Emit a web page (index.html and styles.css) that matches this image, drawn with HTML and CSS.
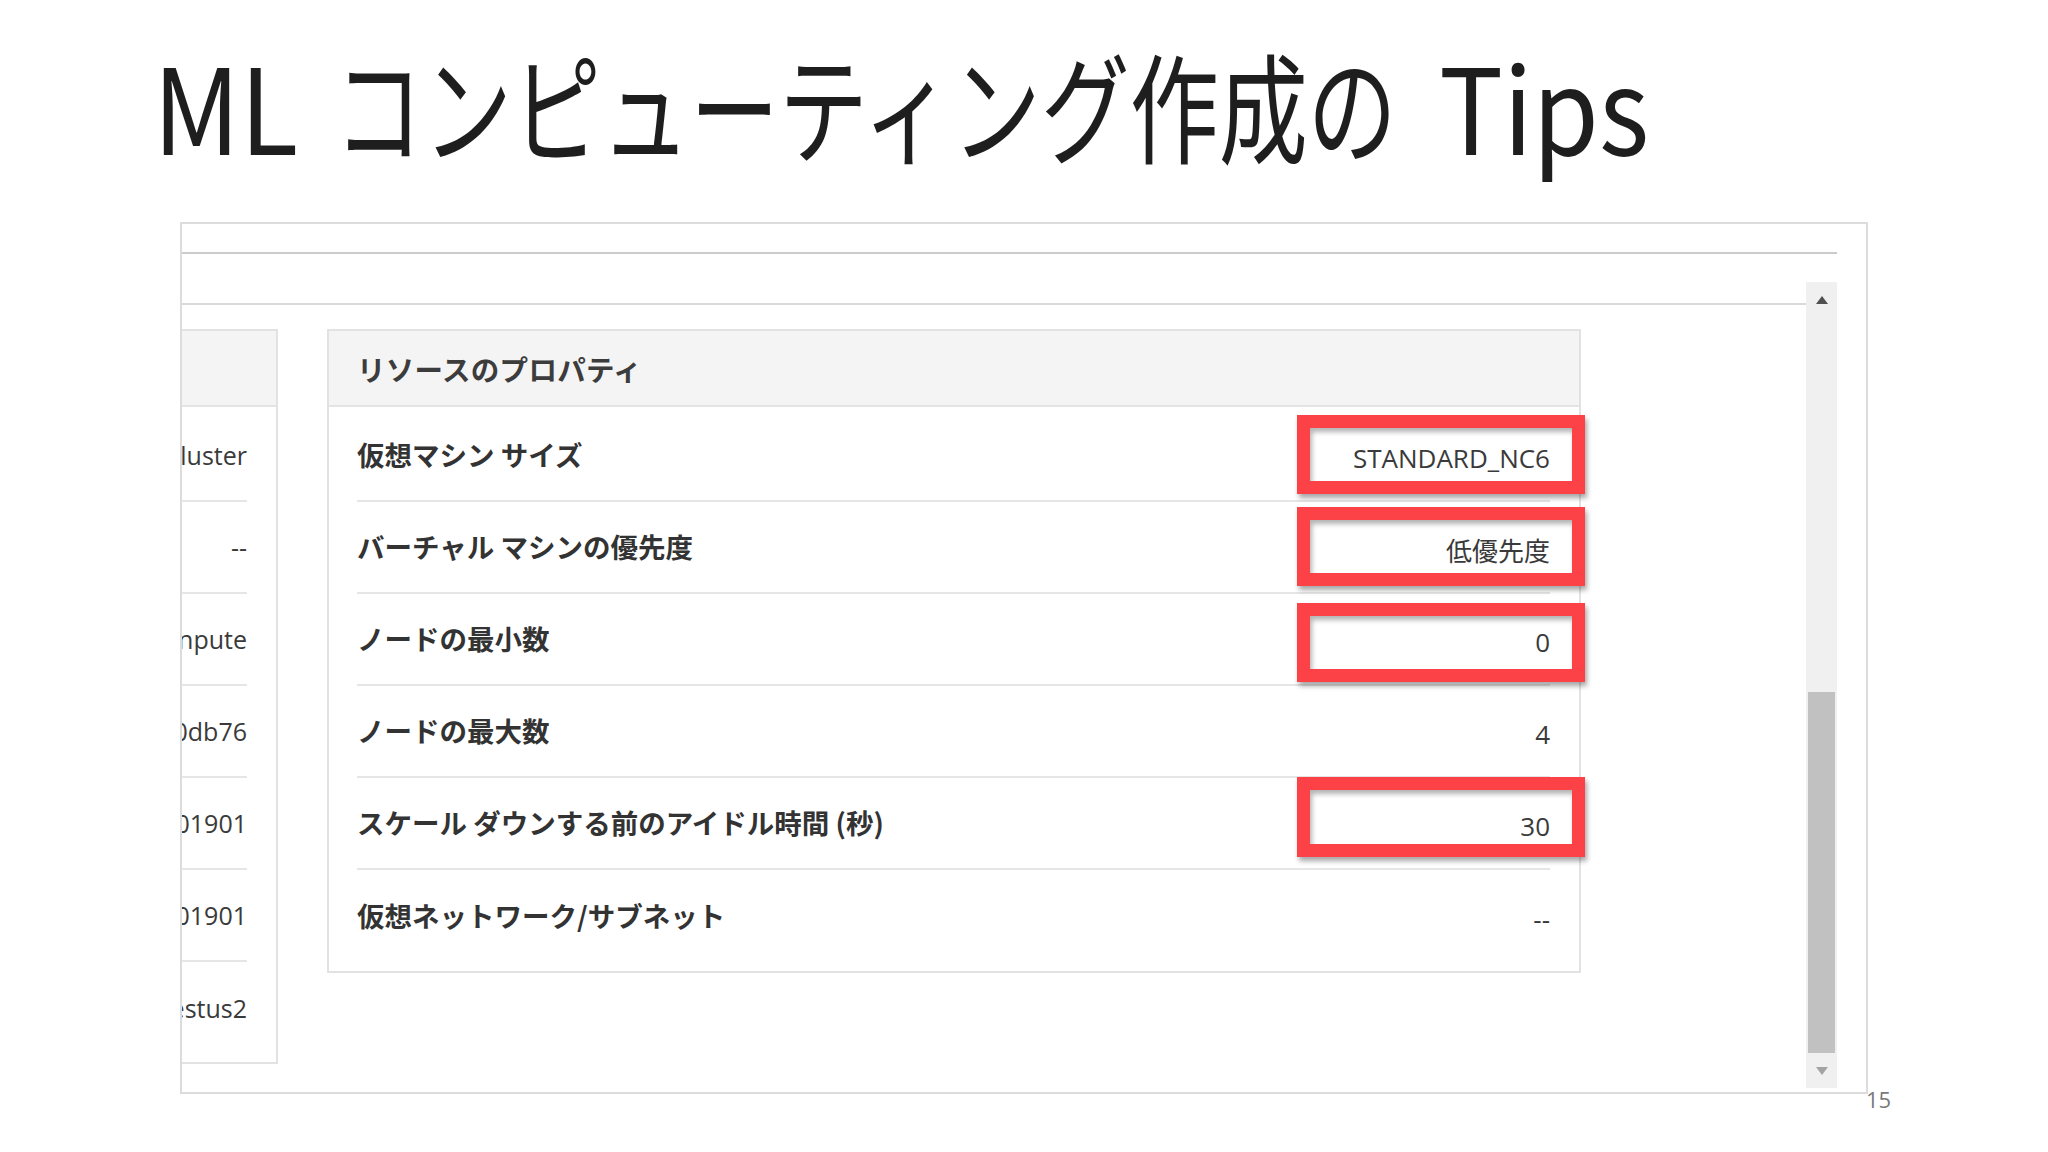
FILE: index.html
```html
<!DOCTYPE html>
<html lang="ja">
<head>
<meta charset="utf-8">
<title>ML コンピューティング作成の Tips</title>
<link rel="stylesheet" href="styles.css">
</head>
<body>
<div class="slide">
  <h1 class="title"><span class="seg seg-ml"><span class="ink ink-ml">ML</span></span><span class="seg seg-jp"><span class="ink ink-jp">コンピューティング作成の</span></span><span class="seg seg-tips"><span class="ink ink-tips">Tips</span></span></h1>

  <div class="frame">
    <div class="topbar"></div>
    <div class="main">
      <div class="content">
        <div class="subbar"></div>
        <div class="panels">
          <div class="panel panel-left">
            <div class="panel-head"></div>
            <div class="panel-body">
              <div class="row"><span class="cell">luster</span></div>
              <div class="row"><span class="cell">--</span></div>
              <div class="row"><span class="cell">npute</span></div>
              <div class="row"><span class="cell">0db76</span></div>
              <div class="row"><span class="cell">01901</span></div>
              <div class="row"><span class="cell">01901</span></div>
              <div class="row"><span class="cell">estus2</span></div>
            </div>
          </div>

          <div class="panel panel-right">
            <div class="panel-head"><span class="head-text">リソースのプロパティ</span></div>
            <div class="panel-body">
              <div class="row prop">
                <span class="label">仮想マシン サイズ</span>
                <span class="value">STANDARD_NC6</span>
                <span class="mark mark-1"></span>
              </div>
              <div class="row prop">
                <span class="label">バーチャル マシンの優先度</span>
                <span class="value">低優先度</span>
                <span class="mark mark-2"></span>
              </div>
              <div class="row prop">
                <span class="label">ノードの最小数</span>
                <span class="value">0</span>
                <span class="mark mark-3"></span>
              </div>
              <div class="row prop">
                <span class="label">ノードの最大数</span>
                <span class="value">4</span>
              </div>
              <div class="row prop">
                <span class="label">スケール ダウンする前のアイドル時間 (秒)</span>
                <span class="value">30</span>
                <span class="mark mark-5"></span>
              </div>
              <div class="row prop">
                <span class="label">仮想ネットワーク/サブネット</span>
                <span class="value">--</span>
              </div>
            </div>
          </div>
        </div>
      </div>
      <div class="scrollbar">
        <div class="sb-btn sb-up"><span class="arrow-up"></span></div>
        <div class="sb-track"><div class="sb-thumb"></div></div>
        <div class="sb-btn sb-down"><span class="arrow-down"></span></div>
      </div>
    </div>
  </div>

  <div class="page-num">15</div>
</div>
</body>
</html>
```

FILE: styles.css
```css
* { box-sizing: border-box; }

html, body {
  margin: 0;
  padding: 0;
  background: #ffffff;
}

body {
  font-family: "Noto Sans CJK JP", "Noto Sans", sans-serif;
  color: #333333;
}

.slide {
  position: relative;
  width: 2048px;
  height: 1152px;
  overflow: hidden;
  padding-top: 44px;
}

/* ---------- title ---------- */
.title {
  display: flex;
  align-items: baseline;
  margin: 0 0 0 153px;
  height: 119px;
  font-size: 119px;
  line-height: 119px;
  font-weight: 400;
  color: #1e1e1e;
  white-space: nowrap;
}

.seg {
  display: block;
  flex: none;
}

.seg-ml { width: 181px; }
.seg-jp { width: 1105px; }

.ink {
  display: inline-block;
  transform-origin: left center;
}

.ink-ml { transform: scaleX(0.9); }
.ink-jp { transform: scaleX(0.748); }
.ink-tips { transform: scaleX(0.9); }

/* ---------- frame ---------- */
.frame {
  margin: 59px 0 0 180px;
  width: 1688px;
  height: 872px;
  border: 2px solid #dcdcdc;
  overflow: hidden;
  background: #ffffff;
}

.topbar {
  height: 30px;
  margin-right: 29px;
  border-bottom: 2px solid #cbcbcb;
}

.main {
  display: flex;
  margin-right: 29px;
}

.content {
  flex: 1;
  min-width: 0;
}

.subbar {
  height: 51px;
  border-bottom: 2px solid #dadada;
}

.panels {
  display: flex;
  align-items: flex-start;
  gap: 49px;
  padding-top: 24px;
}

.panel {
  border: 2px solid #e2e2e2;
  background: #ffffff;
  flex: none;
}

.panel-left {
  width: 300px;
  margin-left: -204px;
}

.panel-right {
  width: 1254px;
}

.panel-head {
  height: 76px;
  background: #f4f4f4;
  border-bottom: 2px solid #e4e4e4;
  display: flex;
  align-items: center;
  padding-left: 28px;
}

.head-text {
  font-size: 28.5px;
  font-weight: 700;
  color: #3c3c3c;
  letter-spacing: 0.3px;
}

.panel-body {
  padding-top: 3px;
}

.panel-left .panel-body {
  padding-bottom: 8px;
}

.panel-right .panel-body {
  padding-bottom: 9px;
}

.row {
  position: relative;
  height: 92px;
  display: flex;
  align-items: center;
  border-bottom: 2px solid #e6e6e6;
}

.row:last-child {
  border-bottom: none;
}

.panel-left .row {
  justify-content: flex-end;
  margin-right: 29px;
}

.cell {
  font-family: "Open Sans", "Noto Sans", sans-serif;
  font-size: 25px;
  color: #3a3a3a;
  white-space: nowrap;
}

.prop {
  justify-content: space-between;
  margin: 0 29px 0 28px;
}

.label {
  font-size: 27.5px;
  font-weight: 700;
  color: #333333;
  white-space: nowrap;
  padding-bottom: 2px;
}

.value {
  font-family: "Open Sans", "Noto Sans CJK JP", sans-serif;
  font-size: 26px;
  font-weight: 400;
  color: #3a3a3a;
  white-space: nowrap;
  padding-top: 5px;
}

.mark {
  position: absolute;
  right: -35px;
  width: 288px;
  height: 79px;
  border: 13px solid #fc4247;
  box-shadow: 2px 4px 5px rgba(0, 0, 0, 0.35), inset 2px 4px 5px rgba(0, 0, 0, 0.3);
  z-index: 2;
}

.mark-1 { top: 5px; }
.mark-2 { top: 5px; }
.mark-3 { top: 9px; }
.mark-5 { top: -1px; height: 80px; }

/* ---------- scrollbar ---------- */
.scrollbar {
  flex: none;
  width: 31px;
  margin-top: 28px;
  height: 806px;
  background: #f0f0f0;
  display: flex;
  flex-direction: column;
}

.sb-btn {
  height: 36px;
  display: flex;
  align-items: center;
  justify-content: center;
}

.arrow-up {
  width: 0;
  height: 0;
  border-left: 6px solid transparent;
  border-right: 6px solid transparent;
  border-bottom: 8px solid #505050;
}

.arrow-down {
  width: 0;
  height: 0;
  border-left: 6px solid transparent;
  border-right: 6px solid transparent;
  border-top: 8px solid #a3a3a3;
}

.sb-track {
  flex: 1;
  padding: 0 2px;
}

.sb-thumb {
  margin-top: 375px;
  height: 361px;
  background: #c1c1c1;
}

.page-num {
  position: absolute;
  left: 1866px;
  top: 1084px;
  font-family: "Open Sans", "Noto Sans", sans-serif;
  font-size: 22px;
  color: #7a7a7a;
}
```
